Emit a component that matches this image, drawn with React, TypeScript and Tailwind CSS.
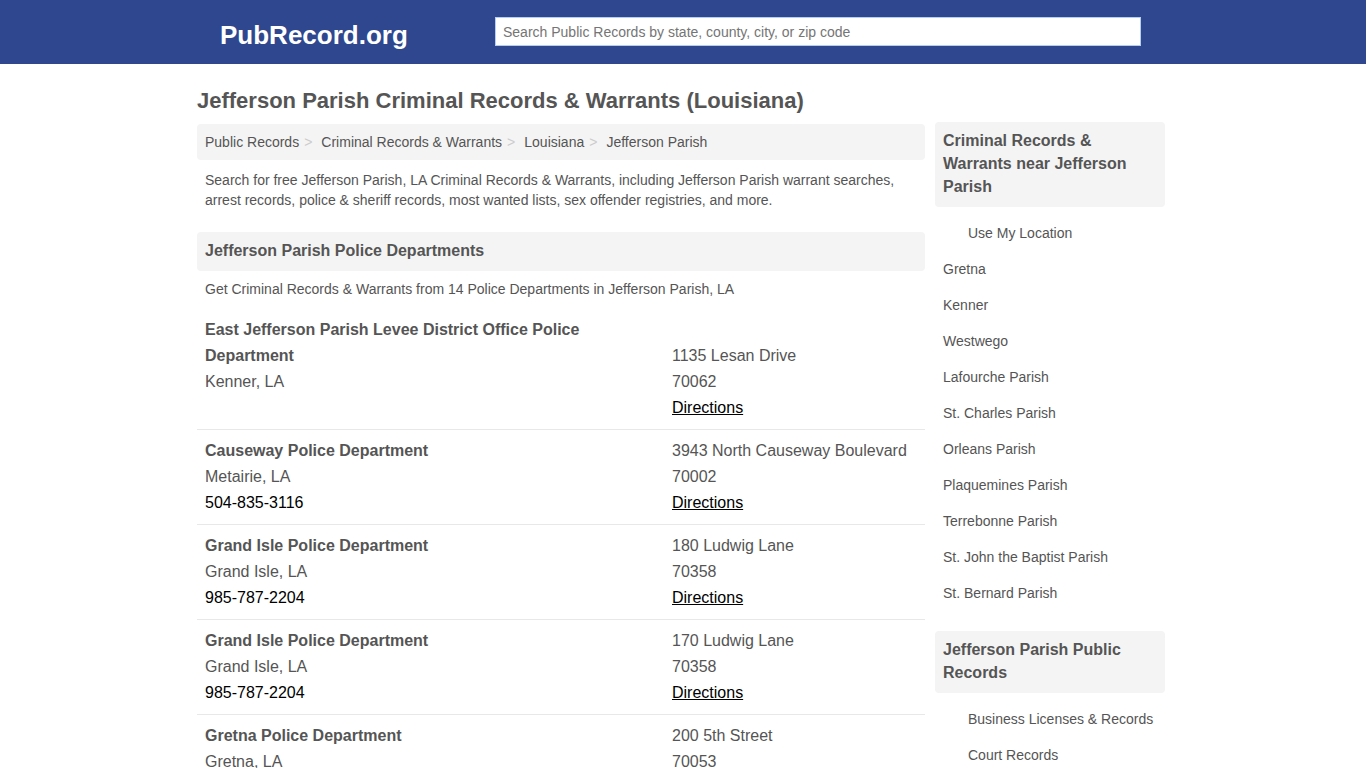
type Department = {
  name: string;
  city: string;
  phone?: string;
  street: string;
  zip: string;
};

const departments: Department[] = [
  {
    name: "East Jefferson Parish Levee District Office Police Department",
    city: "Kenner, LA",
    street: "1135 Lesan Drive",
    zip: "70062",
  },
  {
    name: "Causeway Police Department",
    city: "Metairie, LA",
    phone: "504-835-3116",
    street: "3943 North Causeway Boulevard",
    zip: "70002",
  },
  {
    name: "Grand Isle Police Department",
    city: "Grand Isle, LA",
    phone: "985-787-2204",
    street: "180 Ludwig Lane",
    zip: "70358",
  },
  {
    name: "Grand Isle Police Department",
    city: "Grand Isle, LA",
    phone: "985-787-2204",
    street: "170 Ludwig Lane",
    zip: "70358",
  },
  {
    name: "Gretna Police Department",
    city: "Gretna, LA",
    street: "200 5th Street",
    zip: "70053",
  },
];

const breadcrumbs = [
  "Public Records",
  "Criminal Records & Warrants",
  "Louisiana",
  "Jefferson Parish",
];

const nearby = [
  "Gretna",
  "Kenner",
  "Westwego",
  "Lafourche Parish",
  "St. Charles Parish",
  "Orleans Parish",
  "Plaquemines Parish",
  "Terrebonne Parish",
  "St. John the Baptist Parish",
  "St. Bernard Parish",
];

const records = ["Business Licenses & Records", "Court Records"];

export default function App() {
  return (
    <div className="min-h-screen bg-white font-['Liberation_Sans',Arial,sans-serif] text-sm text-[#555]">
      <Header />
      <div className="mx-auto flex max-w-[972px] items-start gap-[10px] pr-1">
        <main className="min-w-0 flex-1">
          <h1 className="pt-[21px] pb-[7px] text-[22px] leading-8 font-bold">
            Jefferson Parish Criminal Records &amp; Warrants (Louisiana)
          </h1>
          <Breadcrumbs />
          <p className="px-2 pt-[10px] pb-[22px]">
            Search for free Jefferson Parish, LA Criminal Records &amp;
            Warrants, including Jefferson Parish warrant searches, arrest
            records, police &amp; sheriff records, most wanted lists, sex
            offender registries, and more.
          </p>
          <SectionTitle>Jefferson Parish Police Departments</SectionTitle>
          <p className="px-2 pt-2 pb-[10px]">
            Get Criminal Records &amp; Warrants from 14 Police Departments in
            Jefferson Parish, LA
          </p>
          <ul>
            {departments.map((d, index) => (
              <DepartmentRow key={index} data={d} />
            ))}
          </ul>
        </main>
        <aside className="w-[230px] shrink-0 pt-[58px]">
          <SectionTitle>
            Criminal Records &amp; Warrants near Jefferson Parish
          </SectionTitle>
          <ul className="mt-2 mb-5">
            <SideLink label="Use My Location" indent />
            {nearby.map((place) => (
              <SideLink key={place} label={place} />
            ))}
          </ul>
          <SectionTitle>Jefferson Parish Public Records</SectionTitle>
          <ul className="mt-2">
            {records.map((record) => (
              <SideLink key={record} label={record} indent />
            ))}
          </ul>
        </aside>
      </div>
    </div>
  );
}

function Header() {
  return (
    <header className="h-16 bg-[#2e478f]">
      <div className="mx-auto flex max-w-[972px] items-start pt-[17px] pr-7 pl-[23px]">
        <a
          href="#"
          className="w-[275px] shrink-0 pt-[2px] text-[26px] leading-8 font-bold text-white"
        >
          PubRecord.org
        </a>
        <form className="flex flex-1" onSubmit={(evt) => evt.preventDefault()}>
          <input
            type="text"
            aria-label="Search Public Records"
            placeholder="Search Public Records by state, county, city, or zip code"
            className="h-[29px] w-full border border-[#b5cdf0] bg-white px-[7px] text-sm placeholder:text-[#757575]"
          />
        </form>
      </div>
    </header>
  );
}

function Breadcrumbs() {
  return (
    <nav aria-label="Breadcrumb">
      <ol className="flex rounded-sm bg-[#f4f4f4] px-2 py-2">
        {breadcrumbs.map((crumb, index) => (
          <li key={crumb} className="flex">
            <a href="#">{crumb}</a>
            {index < breadcrumbs.length - 1 && (
              <span className="pr-[9px] pl-[5px] text-[#ccc]">&gt;</span>
            )}
          </li>
        ))}
      </ol>
    </nav>
  );
}

function SectionTitle(props: { children: React.ReactNode }) {
  return (
    <h2 className="rounded-sm bg-[#f4f4f4] px-2 pt-[7px] pb-[9px] text-base leading-[23px] font-bold">
      {props.children}
    </h2>
  );
}

function DepartmentRow(props: { data: Department }) {
  const { name, city, phone, street, zip } = props.data;
  return (
    <li className="grid grid-cols-[1fr_245px] items-end border-b border-[#e8e8e8] p-2 text-base leading-[26px]">
      <a href="#" className="pr-8 font-bold">
        {name}
      </a>
      <span>{street}</span>
      <span>{city}</span>
      <span>{zip}</span>
      <span className="text-black">
        {phone && <a href={`tel:${phone}`}>{phone}</a>}
      </span>
      <span>
        <a href="#" className="text-black underline">
          Directions
        </a>
      </span>
    </li>
  );
}

function SideLink(props: { label: string; indent?: boolean }) {
  return (
    <li>
      <a
        href="#"
        className={
          props.indent ? "block py-2 pr-2 pl-[33px]" : "block px-2 py-2"
        }
      >
        {props.label}
      </a>
    </li>
  );
}
